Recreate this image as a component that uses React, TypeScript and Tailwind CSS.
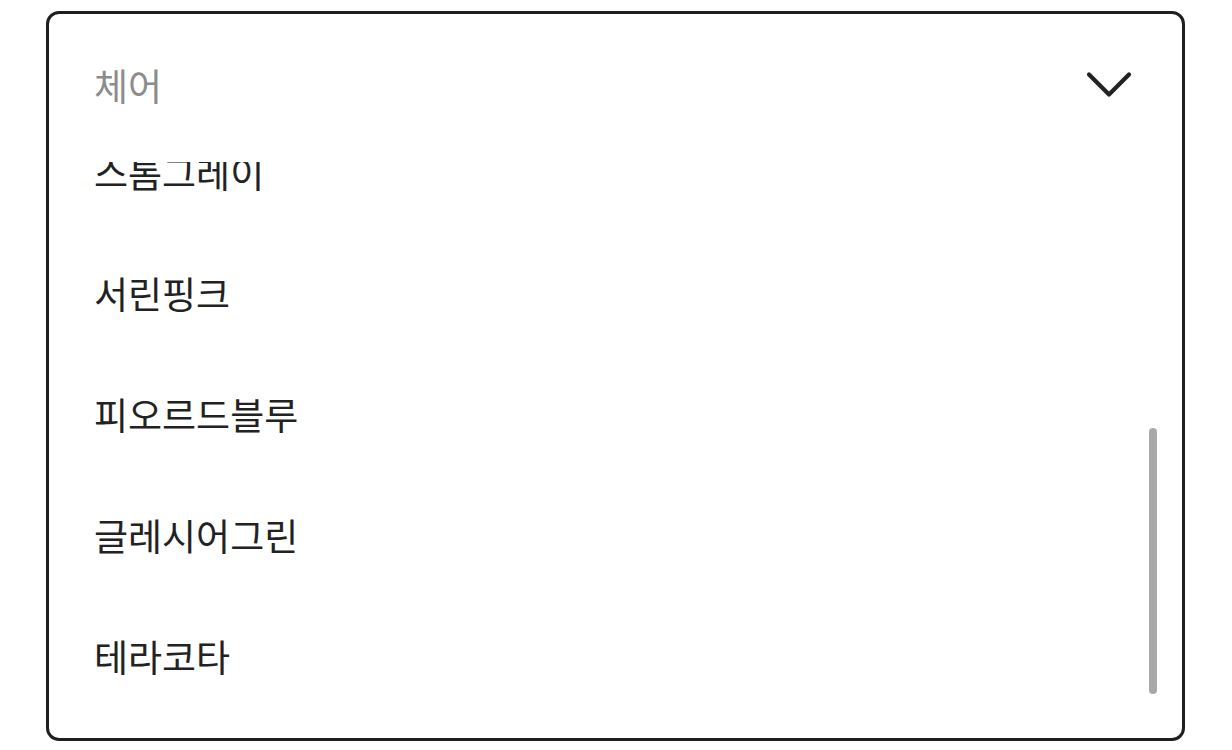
import React, { useLayoutEffect, useRef } from 'react';

const colors = ['스톰그레이', '서린핑크', '피오르드블루', '글레시어그린', '테라코타', '올리브그린'];

const ChevronDown: React.FC = () => (
  <svg width="46" height="28" viewBox="0 0 46 28" fill="none">
    <polyline points="3,3.5 23,23.5 43,3.5" stroke="#222" strokeWidth="4.2" strokeLinecap="round" strokeLinejoin="round" />
  </svg>
);

export default function App() {
  const listRef = useRef<HTMLUListElement>(null);

  useLayoutEffect(() => {
    // list is scrolled a little so the first row sits under the header edge
    if (listRef.current) listRef.current.scrollTop = 50;
  }, []);

  return (
    <div className="min-h-screen bg-white pl-[46px] pt-[11px] font-['Noto_Sans_CJK_KR','Noto_Sans',sans-serif]">
      <div className="relative flex h-[730px] w-[1139px] flex-col overflow-hidden rounded-[13px] border-[3px] border-[#1f1f1f] bg-white">
        <button className="flex h-[148px] shrink-0 items-center justify-between pb-[6px] pl-[45px] pr-[50px] text-left">
          <span className="text-[37px] leading-none text-[#8c8c8c]">체어</span>
          <ChevronDown />
        </button>

        <ul ref={listRef} className="flex-1 overflow-y-scroll [scrollbar-width:none]">
          {colors.map((name) => (
            <li key={name} className="flex h-[121px] items-center pl-[45px] text-[37px] leading-none text-[#222]">
              {name}
            </li>
          ))}
        </ul>

        {/* scroll thumb */}
        <div className="absolute right-[25px] top-[414px] h-[266px] w-[8px] rounded-full bg-[#a8a8a8]" />
      </div>
    </div>
  );
}
